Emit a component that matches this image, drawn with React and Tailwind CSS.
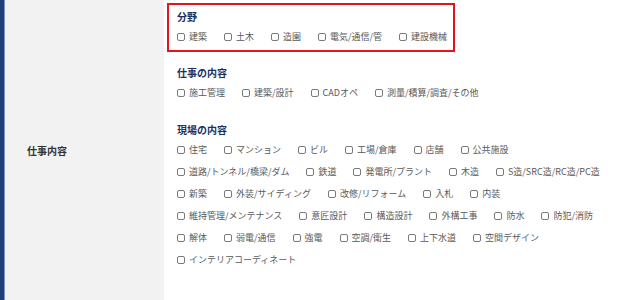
const sections = [
  {
    title: '分野',
    highlight: true,
    rows: [['建築', '土木', '造園', '電気/通信/管', '建設機械']],
  },
  {
    title: '仕事の内容',
    space: 'mt-[15px]',
    rows: [['施工管理', '建築/設計', 'CADオペ', '測量/積算/調査/その他']],
  },
  {
    title: '現場の内容',
    space: 'mt-[25px]',
    rows: [
      ['住宅', 'マンション', 'ビル', '工場/倉庫', '店舗', '公共施設'],
      ['道路/トンネル/橋梁/ダム', '鉄道', '発電所/プラント', '木造', 'S造/SRC造/RC造/PC造'],
      ['新築', '外装/サイディング', '改修/リフォーム', '入札', '内装'],
      ['維持管理/メンテナンス', '意匠設計', '構造設計', '外構工事', '防水', '防犯/消防'],
      ['解体', '弱電/通信', '強電', '空調/衛生', '上下水道', '空間デザイン'],
      ['インテリアコーディネート'],
    ],
  },
];

function Check({ label }) {
  return (
    <label className="flex items-center mr-[17px] whitespace-nowrap">
      <span className="w-[8px] h-[8px] border border-[#7a7a7a] rounded-[2px] bg-white mr-[4px] shrink-0" />
      <span className="text-[9px] leading-[12px] text-[#5a5a5a]">{label}</span>
    </label>
  );
}

function Section({ title, rows, highlight, space }) {
  return (
    <div
      className={
        highlight
          ? 'border-[2px] border-[#e3141b] w-[288px] pl-[8px] pt-[6px] pb-[7px] -ml-[10px]'
          : space
      }
    >
      <h3 className="text-[10px] leading-[12px] font-bold text-[#1c2f5e]">{title}</h3>
      <div className="flex flex-col gap-[10px] mt-[8px]">
        {rows.map((row, i) => (
          <div key={i} className="flex">
            {row.map(item => (
              <Check key={item} label={item} />
            ))}
          </div>
        ))}
      </div>
    </div>
  );
}

export default function App() {
  return (
    <div
      className="flex w-[640px] h-[300px] overflow-hidden bg-white"
      style={{ fontFamily: '"Noto Sans CJK JP", "Noto Sans", sans-serif' }}
    >
      <div className="w-[5px] bg-[#1e3d7a] border-r border-[#7d97c4] shrink-0" />
      <div className="w-[159px] bg-[#f2f2f2] flex items-center pl-[22px] shrink-0">
        <span className="text-[10px] font-bold text-[#333]">仕事内容</span>
      </div>
      <div className="flex-1 pl-[13px] pt-[3px]">
        {sections.map(s => (
          <Section key={s.title} {...s} />
        ))}
      </div>
    </div>
  );
}
